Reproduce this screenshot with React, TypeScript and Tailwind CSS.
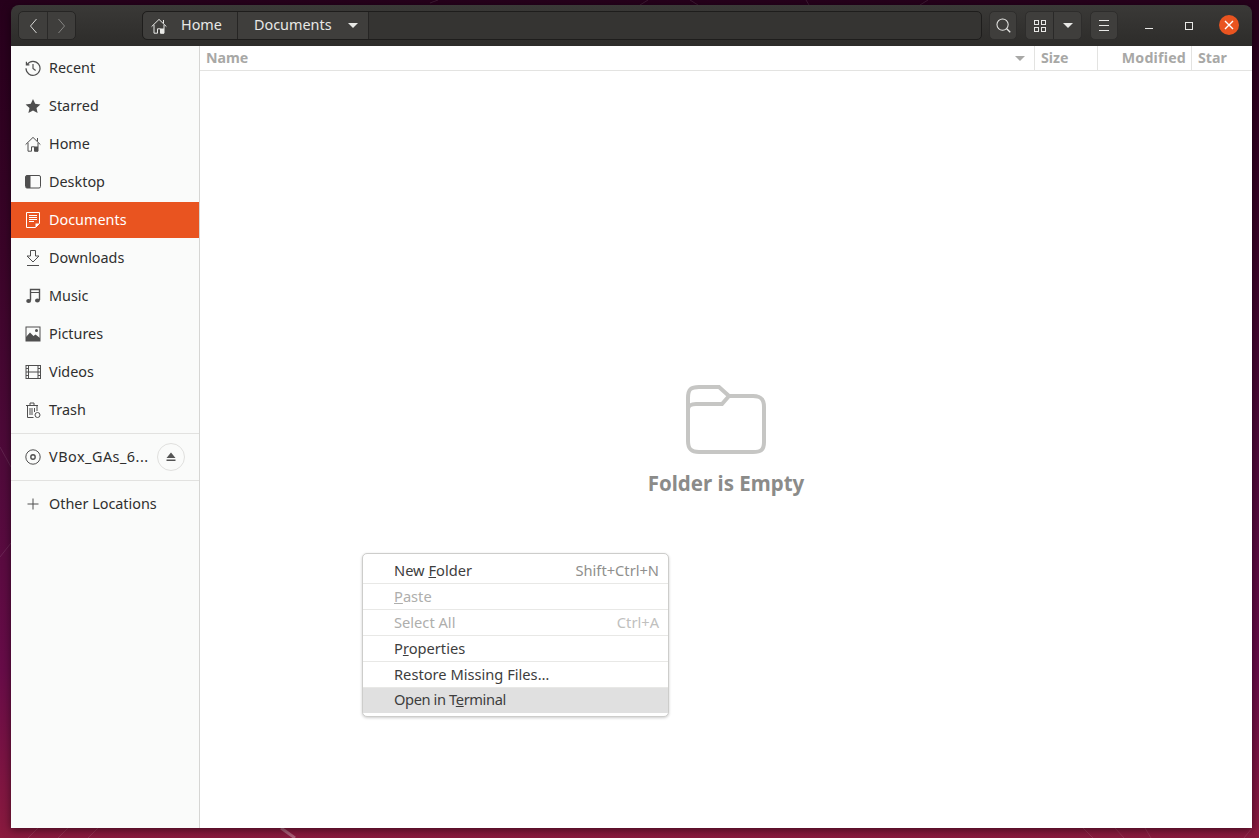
const font = "font-['Noto_Sans',sans-serif]";

function Glyph({ children, size = 16, className = "" }: { children: React.ReactNode; size?: number; className?: string }) {
  return (
    <svg width={size} height={size} viewBox="0 0 16 16" fill="none" stroke="currentColor" strokeWidth="1" className={`shrink-0 ${className}`}>
      {children}
    </svg>
  );
}

const HomeIcon = () => (
  <Glyph>
    <path d="M0.6 8.6 8 1.4l7.4 7.2M3 6.8v8.4h3.5v-4.4h3v4.4H13V6.8" />
    <path d="M9.5 15.5v-5h3.5v5z" fill="currentColor" stroke="none" />
    <path d="M12.5 2v3.4" />
  </Glyph>
);

const items: { label: string; icon: React.ReactNode }[] = [
  {
    label: "Recent",
    icon: (
      <Glyph>
        <path d="M2.2 4.4A7 7 0 1 1 1 8.2M1.4 1.8v3h3M8 4v4.4l2.6 2" strokeWidth="1.2" />
      </Glyph>
    ),
  },
  {
    label: "Starred",
    icon: (
      <Glyph>
        <path d="m8 1 2.2 4.8 5.2.6-3.9 3.5 1.1 5.1L8 12.4 3.4 15l1.1-5.1L.6 6.4l5.2-.6z" fill="currentColor" stroke="none" />
      </Glyph>
    ),
  },
  { label: "Home", icon: <HomeIcon /> },
  {
    label: "Desktop",
    icon: (
      <Glyph>
        <rect x="0.5" y="1.5" width="15" height="12.5" rx="1.5" />
        <path d="M1 2.5a1 1 0 0 1 1-1h3.5v12.5H2a1 1 0 0 1-1-1z" fill="currentColor" stroke="none" />
      </Glyph>
    ),
  },
  {
    label: "Documents",
    icon: (
      <Glyph>
        <path d="M1.5 0.5h13v11L10.5 15.5h-9z" />
        <path d="M4 3.5h8M4 5.5h8M4 7.5h8M4 9.5h5" />
        <path d="M10.5 15.5v-4h4z" fill="currentColor" stroke="none" />
      </Glyph>
    ),
  },
  {
    label: "Downloads",
    icon: (
      <Glyph>
        <path d="M5.5 0.5h5v5.5H14L8 12 2 6h3.5zM2 15.5h12" />
      </Glyph>
    ),
  },
  {
    label: "Music",
    icon: (
      <Glyph>
        <path d="M5.5 12.5V1.5h9v10.5" strokeWidth="1.4" />
        <path d="M5.5 4.5h9" />
        <ellipse cx="3.6" cy="13" rx="2.4" ry="2" fill="currentColor" stroke="none" />
        <ellipse cx="12.4" cy="12.4" rx="2.4" ry="2" fill="currentColor" stroke="none" />
      </Glyph>
    ),
  },
  {
    label: "Pictures",
    icon: (
      <Glyph>
        <rect x="1" y="1" width="14" height="14" />
        <path d="M1 15v-4l4-4.5 3.5 3.5 2-1.5 4.5 3.5V15z" fill="currentColor" stroke="none" />
        <circle cx="11.5" cy="4.5" r="1.5" fill="currentColor" stroke="none" />
      </Glyph>
    ),
  },
  {
    label: "Videos",
    icon: (
      <Glyph>
        <rect x="1" y="1.5" width="14.5" height="13" />
        <path d="M3.5 1.5v13M13 1.5v13M3.5 8h9.5M1 4.5h2.5M1 8h2.5M1 11.5h2.5M13 4.5h2.5M13 8h2.5M13 11.5h2.5" />
      </Glyph>
    ),
  },
  {
    label: "Trash",
    icon: (
      <Glyph>
        <path d="M1 3.5h12M5 3.2V1h4v2.2M2.5 3.5v12h6M12 3.5V9M5 6v7M7 6v7M9.5 6v4" />
        <circle cx="12.5" cy="13" r="2.5" />
      </Glyph>
    ),
  },
];

function SidebarRow({ label, icon, active }: { label: string; icon: React.ReactNode; active?: boolean }) {
  return (
    <div className={`flex h-9 items-center gap-[8px] pl-[14px] text-[14.4px] ${active ? "bg-[#e95420] text-white" : "text-[#2f2f2f]"}`}>
      <span className={active ? "text-white" : "text-[#4f4f4f]"}>{icon}</span>
      <span className="text-inherit">{label}</span>
    </div>
  );
}

function Header() {
  return (
    <div className="flex h-[41px] items-start rounded-t-[8px] bg-gradient-to-b from-[#3a3937] to-[#2d2c2a] pl-[7px] pr-[13px] pt-[6px] text-[#e8e8e6]">
      <div className="flex h-[29px] w-[58px] rounded-[5px] border border-[#262524] bg-[#3f3e3c]">
        <div className="flex w-[29px] items-center justify-center border-r border-[#2a2928]">
          <svg width="9" height="16" viewBox="0 0 9 16" fill="none" stroke="#d8d8d6"><path d="M7.5 1 1.5 8l6 7" /></svg>
        </div>
        <div className="flex flex-1 items-center justify-center">
          <svg width="9" height="16" viewBox="0 0 9 16" fill="none" stroke="#858482"><path d="M1.5 1l6 7-6 7" /></svg>
        </div>
      </div>

      <div className="ml-[66px] flex h-[29px] w-[840px] rounded-[5px] border border-[#1e1d1c] bg-[#353432] text-[14.4px]">
        <div className="flex w-[95px] items-center rounded-l-[5px] border-r border-[#262524] bg-[#3f3e3c] pl-[8px]">
          <HomeIcon />
          <span className="ml-[14px] pb-[2px]">Home</span>
        </div>
        <div className="flex w-[131px] items-center border-r border-[#262524] bg-[#3f3e3c] pl-[16px]">
          <span className="pb-[2px]">Documents</span>
          <span className="ml-[16px] h-0 w-0 border-x-[5px] border-t-[5px] border-x-transparent border-t-[#e8e8e6]" />
        </div>
      </div>

      <div className="ml-[7px] flex h-[29px] w-[28px] items-center justify-center rounded-[5px] border border-[#2e2d2c] bg-[#3f3e3c]">
        <svg width="15" height="15" viewBox="0 0 16 16" fill="none" stroke="#e8e8e6" strokeWidth="1.1"><circle cx="7" cy="7" r="6" /><path d="m11.4 11.4 3.8 3.8" strokeWidth="1.4" /></svg>
      </div>

      <div className="ml-[8px] flex h-[29px] w-[57px] rounded-[5px] border border-[#2e2d2c] bg-[#3f3e3c]">
        <div className="flex w-[28px] items-center justify-center border-r border-[#2a2928]">
          <svg width="14" height="14" viewBox="0 0 14 14" fill="none" stroke="#e8e8e6"><rect x="1.5" y="1.5" width="4" height="4" /><rect x="8.5" y="1.5" width="4" height="4" /><rect x="1.5" y="8.5" width="4" height="4" /><rect x="8.5" y="8.5" width="4" height="4" /></svg>
        </div>
        <div className="flex flex-1 items-center justify-center">
          <span className="h-0 w-0 border-x-[5px] border-t-[5px] border-x-transparent border-t-[#e8e8e6]" />
        </div>
      </div>

      <div className="ml-[8px] flex h-[29px] w-[28px] items-center justify-center rounded-[5px] border border-[#2e2d2c] bg-[#3f3e3c]">
        <svg width="10" height="11" viewBox="0 0 10 11" stroke="#e8e8e6"><path d="M0 .5h10M0 5.5h10M0 10.5h10" /></svg>
      </div>

      <div className="ml-[27px] flex h-[29px] w-[8px] items-center pt-[5px]">
        <span className="h-px w-[8px] bg-[#e8e8e6]" />
      </div>
      <div className="ml-[32px] flex h-[29px] w-[8px] items-center">
        <span className="h-[8px] w-[8px] border border-[#e8e8e6]" />
      </div>
      <div className="ml-[26px] mt-[4px] flex h-5 w-5 items-center justify-center rounded-full bg-[#e95420]">
        <svg width="10" height="10" viewBox="0 0 10 10" stroke="#fff" strokeWidth="1.4"><path d="m1 1 8 8M9 1 1 9" /></svg>
      </div>
    </div>
  );
}

function Sidebar() {
  return (
    <aside className="flex w-[189px] shrink-0 flex-col border-r border-[#d6d6d4] bg-[#fafbfa] pt-1">
      <div className="flex flex-col gap-[2px]">
        {items.map((item) => (
          <SidebarRow key={item.label} label={item.label} icon={item.icon} active={item.label === "Documents"} />
        ))}
      </div>
      <div className="mt-[5px] h-px bg-[#e2e2e0]" />
      <div className="mt-[5px] flex h-9 items-center pl-[14px] text-[14.4px] text-[#2f2f2f]">
        <span className="text-[#4f4f4f]">
          <Glyph>
            <circle cx="8" cy="8" r="7.2" />
            <circle cx="8" cy="8" r="2.2" strokeWidth="1.4" />
          </Glyph>
        </span>
        <span className="ml-[8px] tracking-[0.5px]">VBox_GAs_6...</span>
        <span className="ml-auto mr-[14px] flex h-7 w-7 items-center justify-center rounded-full border border-[#e0e0de]">
          <svg width="10" height="10" viewBox="0 0 10 10" fill="#555"><path d="M5 0.5 9.5 6h-9zM0.5 7.5h9V9h-9z" /></svg>
        </span>
      </div>
      <div className="mt-[5px] h-px bg-[#e2e2e0]" />
      <div className="mt-[5px]">
        <SidebarRow
          label="Other Locations"
          icon={
            <Glyph>
              <path d="M8 2.5v11M2.5 8h11" />
            </Glyph>
          }
        />
      </div>
    </aside>
  );
}

function Columns() {
  return (
    <div className="flex h-[25px] shrink-0 border-b border-[#e3e3e1] text-[14.2px] font-bold text-[#a8a8a6]">
      <div className="flex w-[835px] items-center justify-between border-r border-[#e3e3e1] pl-[6px] pr-[9px]">
        <span>Name</span>
        <span className="h-0 w-0 border-x-[5px] border-t-[5px] border-x-transparent border-t-[#a8a8a6]" />
      </div>
      <div className="flex w-[63px] items-center border-r border-[#e3e3e1] pl-[6px]">Size</div>
      <div className="flex w-[94px] items-center justify-end border-r border-[#e3e3e1] pr-[5px] tracking-[0.2px]">Modified</div>
      <div className="flex flex-1 items-center pl-[6px]">Star</div>
    </div>
  );
}

function EmptyState() {
  return (
    <div className="flex flex-1 flex-col items-center pt-[313px]">
      <svg width="82" height="72" viewBox="0 0 82 72" fill="none" stroke="#c6c6c4" strokeWidth="4">
        <path d="M3 57V14C3 5 6 3 14 3h20l10 9h24c8 0 11 3 11 11v35c0 8-3 10-11 10H14C6 68 3 65 3 57Z" />
        <path d="M3 25c0-3 3-5 8-5h26l7-8" />
      </svg>
      <div className="mt-[13px] text-[20.5px] leading-[28px] font-bold text-[#8b8b89]">Folder is Empty</div>
    </div>
  );
}

function MenuRow({ label, hint, disabled, hover, last }: { label: React.ReactNode; hint?: string; disabled?: boolean; hover?: boolean; last?: boolean }) {
  return (
    <div
      className={`flex items-center justify-between pl-[31px] pr-[9px] text-[14.67px] ${last ? "h-[25px] pb-[3px]" : "h-[26px] border-b border-[#e8e8e6] pb-[2px]"} ${hover ? "bg-[#e0e0e0]" : ""} ${disabled ? "text-[#aeaeac]" : "text-[#3d3d3d]"}`}
    >
      <span>{label}</span>
      {hint && <span className={disabled ? "text-[#c0c0be]" : "text-[#8f8f8d]"}>{hint}</span>}
    </div>
  );
}

function ContextMenu() {
  return (
    <div className="absolute left-[351px] top-[507px] w-[307px] rounded-[5px] border border-[#cdcdcb] bg-white pt-[4px] pb-[3px] shadow-[0_1px_3px_rgba(0,0,0,0.2)]">
      <MenuRow label={<>New <span className="underline">F</span>older</>} hint="Shift+Ctrl+N" />
      <MenuRow label={<><span className="underline">P</span>aste</>} disabled />
      <MenuRow label="Select All" hint="Ctrl+A" disabled />
      <MenuRow label={<>P<span className="underline">r</span>operties</>} />
      <MenuRow label="Restore Missing Files…" />
      <MenuRow label={<span className="tracking-[-0.4px]">Open in T<span className="underline">e</span>rminal</span>} hover last />
    </div>
  );
}

function Wallpaper() {
  return (
    <svg className="absolute inset-0 h-full w-full" viewBox="0 0 1259 838" fill="none">
      <g stroke="#ffffff" strokeOpacity="0.1">
        <path d="M0 447 11 467M0 557 11 543M28 838l10-10M58 838l10-10M88 838l10-10M1083 828l10 10M1115 828l9 10M1145 828l6 10M1244 838l8-10" />
        <path d="M430 3l8-3M690 0l8 5M806 0l3 5M640 5l8-5M920 5l8-5" />
      </g>
      <path d="M281 828l14 10" stroke="#ffffff" strokeOpacity="0.3" strokeWidth="3" />
    </svg>
  );
}

export default function App() {
  return (
    <div className={`relative h-[838px] w-[1259px] overflow-hidden bg-[linear-gradient(180deg,#26001b_0%,#3a0428_30%,#4f0a3a_55%,#670c48_80%,#8a1a3e_100%)] pl-[11px] pt-[5px] ${font}`}>
      <Wallpaper />
      <div className="relative flex h-[823px] w-[1241px] flex-col rounded-t-[8px] shadow-[0_2px_8px_rgba(0,0,0,0.5)]">
        <Header />
        <div className="relative flex min-h-0 flex-1 bg-white">
          <Sidebar />
          <main className="flex flex-1 flex-col">
            <Columns />
            <EmptyState />
          </main>
          <ContextMenu />
        </div>
      </div>
    </div>
  );
}
